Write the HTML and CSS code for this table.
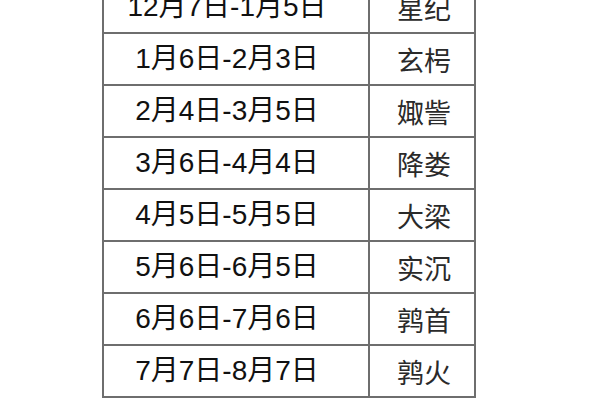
FILE: index.html
```html
<!DOCTYPE html>
<html lang="zh">
<head>
<meta charset="utf-8">
<link rel="stylesheet" href="styles.css">
</head>
<body>
<div class="table">
  <div class="row"><div class="date">12月7日-1月5日</div><div class="name">星纪</div></div>
  <div class="row"><div class="date">1月6日-2月3日</div><div class="name">玄枵</div></div>
  <div class="row"><div class="date">2月4日-3月5日</div><div class="name">娵訾</div></div>
  <div class="row"><div class="date">3月6日-4月4日</div><div class="name">降娄</div></div>
  <div class="row"><div class="date">4月5日-5月5日</div><div class="name">大梁</div></div>
  <div class="row"><div class="date">5月6日-6月5日</div><div class="name">实沉</div></div>
  <div class="row"><div class="date">6月6日-7月6日</div><div class="name">鹑首</div></div>
  <div class="row"><div class="date">7月7日-8月7日</div><div class="name">鹑火</div></div>
</div>
</body>
</html>
```
FILE: styles.css
```css
html, body {
  margin: 0;
  padding: 0;
  background: #ffffff;
  overflow: hidden;
}
body {
  font-family: "Liberation Sans", "Noto Sans CJK SC", sans-serif;
  color: #111111;
}
.table {
  margin-top: -18px;
  margin-left: 102px;
  width: 374px;
  border-left: 2px solid #6e6e6e;
  box-sizing: border-box;
}
.row {
  display: grid;
  grid-template-columns: 266px 106px;
  height: 52px;
  box-sizing: border-box;
  border-bottom: 2px solid #6e6e6e;
}
.date, .name {
  display: flex;
  align-items: center;
  justify-content: center;
  border-right: 2px solid #6e6e6e;
  line-height: 1;
}
.date {
  font-size: 28px;
  padding-right: 18px;
}
.name {
  color: #2a2a2a;
  font-family: "Noto Sans CJK SC", sans-serif;
  font-size: 27px;
  padding-left: 4px;
}
```
